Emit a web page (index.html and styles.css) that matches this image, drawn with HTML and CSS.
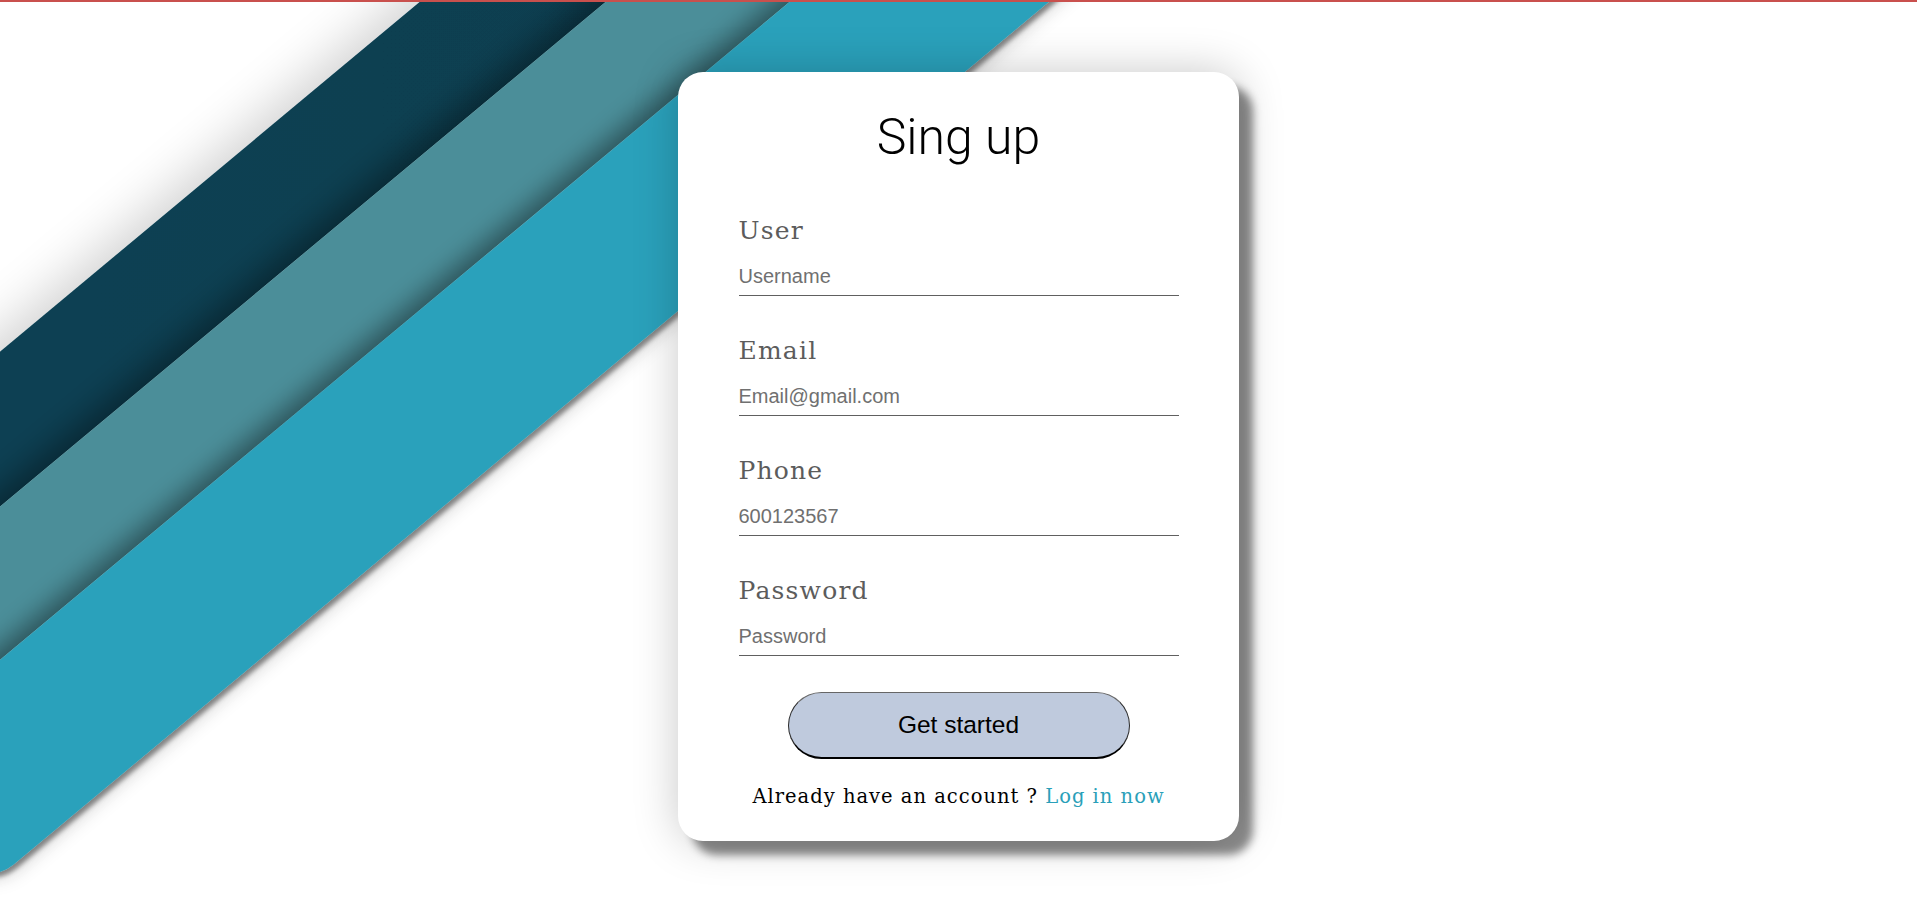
FILE: index.html
```html
<!DOCTYPE html>
<html lang="en">
<head>
<meta charset="utf-8">
<title>Sing up</title>
<link rel="stylesheet" href="styles.css">
</head>
<body>
<div class="page">
  <svg class="bg" viewBox="0 0 1917 910" preserveAspectRatio="none" aria-hidden="true">
    <defs>
      <linearGradient id="gDark" x1="0" y1="0" x2="1" y2="0">
        <stop offset="0" stop-color="#0c4355"/>
        <stop offset="1" stop-color="#0a3e50"/>
      </linearGradient>
      <filter id="shDark" x="-50%" y="-50%" width="200%" height="200%">
        <feGaussianBlur in="SourceAlpha" stdDeviation="26" result="b1"/>
        <feOffset in="b1" dx="-8" dy="-10" result="o1"/>
        <feComponentTransfer in="o1" result="s1"><feFuncA type="linear" slope="0.18"/></feComponentTransfer>
        <feMerge><feMergeNode in="s1"/><feMergeNode in="SourceGraphic"/></feMerge>
      </filter>
      <filter id="shMid" x="-50%" y="-50%" width="200%" height="200%">
        <feGaussianBlur in="SourceAlpha" stdDeviation="16" result="b1"/>
        <feOffset in="b1" dx="-8" dy="-10" result="o1"/>
        <feComponentTransfer in="o1" result="s1"><feFuncA type="linear" slope="0.38"/></feComponentTransfer>
        <feMerge><feMergeNode in="s1"/><feMergeNode in="SourceGraphic"/></feMerge>
      </filter>
      <filter id="shLight" x="-50%" y="-50%" width="200%" height="200%">
        <feGaussianBlur in="SourceAlpha" stdDeviation="12" result="b1"/>
        <feOffset in="b1" dx="-7" dy="-8" result="o1"/>
        <feComponentTransfer in="o1" result="s1"><feFuncA type="linear" slope="0.4"/></feComponentTransfer>
        <feGaussianBlur in="SourceAlpha" stdDeviation="2" result="b2"/>
        <feOffset in="b2" dx="3" dy="3.5" result="o2"/>
        <feComponentTransfer in="o2" result="s2"><feFuncA type="linear" slope="0.4"/></feComponentTransfer>
        <feGaussianBlur in="SourceAlpha" stdDeviation="9" result="b3"/>
        <feOffset in="b3" dx="6" dy="7" result="o3"/>
        <feComponentTransfer in="o3" result="s3"><feFuncA type="linear" slope="0.1"/></feComponentTransfer>
        <feMerge><feMergeNode in="s3"/><feMergeNode in="s1"/><feMergeNode in="s2"/><feMergeNode in="SourceGraphic"/></feMerge>
      </filter>
    </defs>
    <polygon points="482,-50 668,-50 -592,1000 -778,1000" fill="url(#gDark)" filter="url(#shDark)"/>
    <polygon points="668,-50 852,-50 -408,1000 -592,1000" fill="#4b8e99" filter="url(#shMid)"/>
    <path d="M852,-50 L1111,-50 L13.6,864.5 A40,40 0 0 1 -42.7,859.4 L-123.3,762.7 Z" fill="#2aa1bb" filter="url(#shLight)"/>
  </svg>
  <div class="topline"></div>
  <form class="card">
    <h1 class="title">Sing up</h1>
    <div class="fields">
      <div class="field">
        <label class="label" for="user">User</label>
        <input class="input" id="user" type="text" placeholder="Username">
      </div>
      <div class="field">
        <label class="label" for="email">Email</label>
        <input class="input" id="email" type="email" placeholder="Email@gmail.com">
      </div>
      <div class="field">
        <label class="label" for="phone">Phone</label>
        <input class="input" id="phone" type="tel" placeholder="600123567">
      </div>
      <div class="field">
        <label class="label" for="password">Password</label>
        <input class="input" id="password" type="password" placeholder="Password">
      </div>
    </div>
    <button class="btn" type="button">Get started</button>
    <p class="footer">Already have an account ? <a class="link" href="#">Log in now</a></p>
  </form>
</div>
</body>
</html>
```

FILE: styles.css
```css
html, body {
  margin: 0;
  height: 100%;
}

body {
  background: #ffffff;
}

.page {
  position: relative;
  min-height: 100vh;
  box-sizing: border-box;
  padding-top: 3px;
  display: flex;
  justify-content: center;
  align-items: center;
  overflow: hidden;
}

.bg {
  position: absolute;
  left: 0;
  top: 0;
  width: 100%;
  height: 100%;
  z-index: 0;
}

.topline {
  position: absolute;
  top: 0;
  left: 0;
  right: 0;
  height: 2px;
  background: #c9504d;
  z-index: 2;
}

.card {
  position: relative;
  z-index: 1;
  width: 561px;
  box-sizing: border-box;
  padding: 35px 0 32px;
  background: #ffffff;
  border-radius: 25px;
  box-shadow: 14px 14px 8px rgba(0, 0, 0, 0.45), 0 0 45px rgba(0, 0, 0, 0.22);
  display: flex;
  flex-direction: column;
  align-items: center;
}

.title {
  margin: 0;
  font-family: Roboto, "Open Sans", sans-serif;
  font-weight: 300;
  font-size: 50px;
  line-height: 60px;
  color: #000000;
}

.fields {
  width: 440px;
  margin-top: 49px;
  display: flex;
  flex-direction: column;
  gap: 40px;
}

.field {
  display: flex;
  flex-direction: column;
  gap: 14px;
}

.label {
  font-family: "DejaVu Serif", serif;
  font-size: 25px;
  line-height: 30px;
  letter-spacing: 1.2px;
  color: #5c5c5c;
}

.input {
  display: block;
  width: 100%;
  height: 36px;
  box-sizing: border-box;
  padding: 5px 0 7px;
  border: 0;
  border-bottom: 1px solid #606060;
  background: transparent;
  outline: none;
  font-family: "Liberation Sans", Arial, sans-serif;
  font-size: 20px;
  color: #333333;
}

.input::placeholder {
  color: #707070;
  opacity: 1;
}

.btn {
  margin-top: 36px;
  width: 342px;
  height: 67px;
  padding: 0;
  border-radius: 34px;
  background: #bfcadd;
  border: 1px solid #2a2a2a;
  border-top-color: #666666;
  border-bottom: 2px solid #000000;
  font-family: "Liberation Sans", Arial, sans-serif;
  font-size: 24.5px;
  color: #000000;
  cursor: pointer;
}

.footer {
  margin: 26px 0 0;
  font-family: "DejaVu Serif", serif;
  font-size: 19.5px;
  line-height: 24px;
  letter-spacing: 1px;
  color: #000000;
}

.link {
  color: #2a9fb9;
  text-decoration: none;
}
```
